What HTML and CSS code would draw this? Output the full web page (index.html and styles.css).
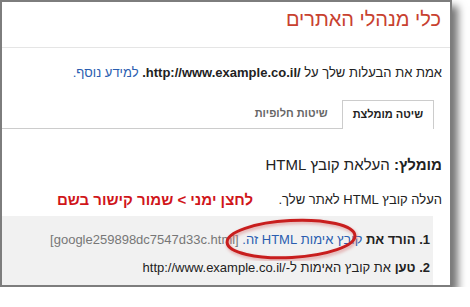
FILE: index.html
```html
<!DOCTYPE html>
<html lang="he" dir="rtl">
<head>
<meta charset="utf-8">
<link rel="stylesheet" href="styles.css">
</head>
<body>
<div class="frame">
  <header class="header"><h1 class="title">כלי מנהלי האתרים</h1></header>
  <p class="verify">אמת את הבעלות שלך על <b><span dir="ltr">http://www.example.co.il/</span>.</b> <a class="link" href="#">למידע נוסף.</a></p>
  <div class="tabs">
    <div class="tab active">שיטה מומלצת</div>
    <div class="tab">שיטות חלופיות</div>
  </div>
  <h2 class="heading"><b>מומלץ:</b> העלאת קובץ HTML</h2>
  <p class="desc">העלה קובץ HTML לאתר שלך.</p>
  <div class="steps">
    <div class="step"><b>1. הורד את</b> <a class="link" href="#">קובץ אימות HTML זה.</a> <span class="file" dir="ltr">[google259898dc7547d33c.html]</span></div>
    <div class="step"><b>2. טען</b> את קובץ האימות ל-<span dir="ltr">http://www.example.co.il/</span></div>
  </div>
  <div class="note">לחצן ימני &gt; שמור קישור בשם</div>
  <svg class="circle" viewBox="0 0 136 44" aria-hidden="true">
    <defs>
      <filter id="glow" x="-10%" y="-30%" width="120%" height="160%">
        <feGaussianBlur stdDeviation="1.4"/>
      </filter>
    </defs>
    <g transform="rotate(-3 67 22)">
      <ellipse cx="68" cy="24" rx="64" ry="18.5" fill="none" stroke="#d98080" stroke-width="4" opacity="0.55" filter="url(#glow)"/>
      <ellipse cx="67" cy="22" rx="64" ry="18.5" fill="none" stroke="#c81e1e" stroke-width="3"/>
    </g>
  </svg>
</div>
</body>
</html>
```
FILE: styles.css
```css
* {
  margin: 0;
  padding: 0;
  box-sizing: border-box;
}

body {
  margin: 0;
  background: #fff;
  font-family: "Liberation Sans", Arial, sans-serif;
  font-size: 13px;
  color: #222;
}

.frame {
  position: relative;
  width: 452px;
  height: 287px;
  margin-right: auto;
  margin-left: 0;
  border: 2px solid #7d7d7d;
  box-shadow: 6px 6px 8px rgba(0, 0, 0, 0.55);
  overflow: hidden;
  background: #fff;
}

.header {
  height: 46px;
  border-bottom: 1px solid #e5e5e5;
  padding: 5px 9px 0;
}

.title {
  font-size: 20px;
  font-weight: normal;
  line-height: 24px;
  color: #c8412f;
}

.verify {
  margin-top: 17px;
  padding: 0 8px;
  line-height: 16px;
}

.tabs {
  display: flex;
  gap: 4px;
  margin-top: 19px;
  margin-right: 16px;
  height: 29px;
  border-bottom: 1px solid #ccc;
}

.tab {
  padding: 0 10px;
  line-height: 27px;
  font-size: 11px;
  font-weight: bold;
  color: #666;
}

.tab.active {
  height: 29px;
  border: 1px solid #ccc;
  border-bottom: none;
  background: #fff;
  color: #222;
}

.heading {
  margin-top: 26px;
  padding: 0 8px;
  font-size: 15px;
  font-weight: normal;
  line-height: 20px;
}

.desc {
  margin-top: 17px;
  padding: 0 8px;
  line-height: 16px;
}

.steps {
  margin-top: 8px;
  margin-right: 17px;
  background: #f1f1f1;
  padding: 16px 3px 20px;
}

.step {
  line-height: 16px;
}

.step + .step {
  margin-top: 12px;
}

.file {
  color: #777;
}

.link {
  color: #2a5db0;
  text-decoration: none;
}

.note {
  position: absolute;
  left: 55px;
  top: 189px;
  font-size: 15px;
  font-weight: bold;
  line-height: 18px;
  color: #d0151a;
}

.circle {
  position: absolute;
  left: 222px;
  top: 215px;
  width: 136px;
  height: 44px;
}
```
